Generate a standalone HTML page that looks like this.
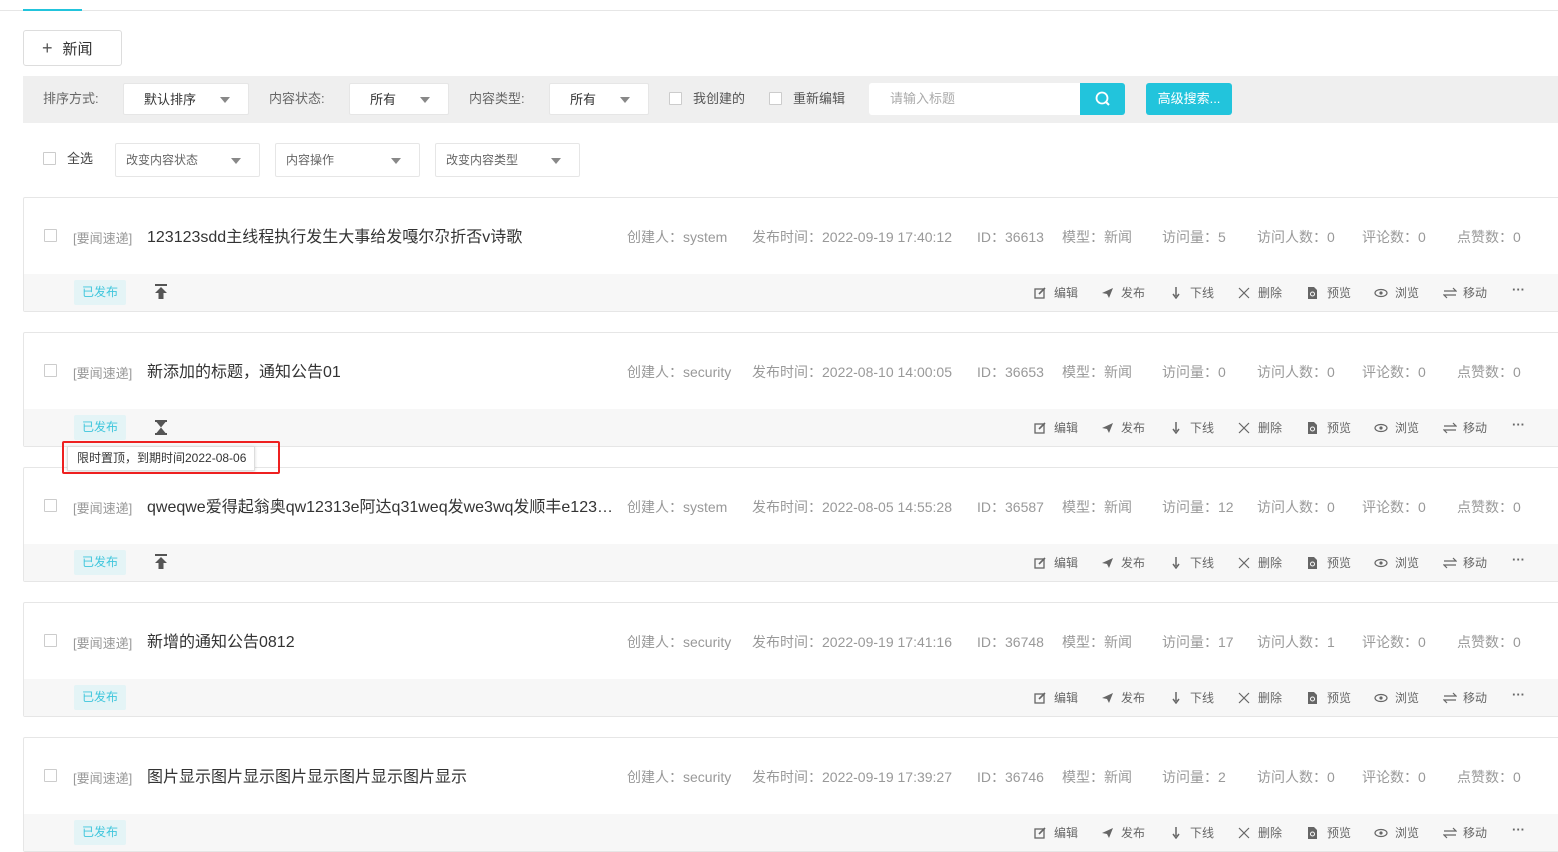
<!DOCTYPE html>
<html><head><meta charset="utf-8">
<style>
*{box-sizing:border-box;margin:0;padding:0}
body{width:1558px;height:805px;overflow:hidden;background:#fff;font-family:"Liberation Sans","Noto Sans CJK SC",sans-serif;color:#333;position:relative}
.a{position:absolute;white-space:nowrap}
.lbl{position:absolute;top:83px;height:32px;line-height:32px;font-size:13px;color:#666;white-space:nowrap}
.sel{position:absolute;background:#fff;border:1px solid #e6e6e6;border-radius:2px;height:32px;font-size:13px;color:#333;padding:0 0 0 20px;line-height:31px}
.sel .tri{position:absolute;right:18px;top:13px;width:0;height:0;border-left:5px solid transparent;border-right:5px solid transparent;border-top:6px solid #888}
.cb{position:absolute;width:13px;height:13px;border:1px solid #ccc;background:#fff;border-radius:1px}
.card{position:absolute;left:23px;width:1540px;height:115px;border:1px solid #e6e6e6;border-radius:2px;background:#fff}
.foot{position:absolute;left:0;right:0;top:76px;height:37px;background:#f7f7f7}
.tag{position:absolute;left:50px;top:6px;width:52px;height:25px;background:#e4f4f6;color:#3fc6dc;font-size:12px;line-height:25px;text-align:center;border-radius:2px}
.meta{position:absolute;top:29px;font-size:14px;color:#999;white-space:nowrap}
.t{position:absolute;top:25px;font-size:16px;color:#333;left:123px;white-space:nowrap}
.cat{position:absolute;top:30px;left:49px;font-size:13px;color:#999}
.act{position:absolute;top:10px;font-size:12px;color:#666}
.ic{position:absolute;top:12px}
</style></head><body>
<div class="a" style="left:0;top:10px;width:1558px;height:1px;background:#e6e6e6"></div>
<div class="a" style="left:23px;top:9px;width:59px;height:2px;background:#22c4dc"></div>
<div class="a" style="left:23px;top:30px;width:99px;height:36px;border:1px solid #ddd;border-radius:3px;font-size:15px;line-height:34px;padding-left:18px;color:#333"><span style="font-size:18px;color:#555;margin-right:10px">+</span>新闻</div>

<div class="a" style="left:23px;top:76px;width:1535px;height:47px;background:#efefef"></div>
<div class="lbl" style="left:43px">排序方式:</div>
<div class="sel" style="left:123px;top:83px;width:126px">默认排序<span class="tri"></span></div>
<div class="lbl" style="left:269px">内容状态:</div>
<div class="sel" style="left:349px;top:83px;width:100px">所有<span class="tri"></span></div>
<div class="lbl" style="left:469px">内容类型:</div>
<div class="sel" style="left:549px;top:83px;width:100px">所有<span class="tri"></span></div>
<div class="cb" style="left:669px;top:92px"></div><div class="lbl" style="left:693px;color:#555">我创建的</div>
<div class="cb" style="left:769px;top:92px"></div><div class="lbl" style="left:793px;color:#555">重新编辑</div>
<div class="a" style="left:869px;top:83px;width:212px;height:32px;background:#fff;border-radius:3px 0 0 3px;font-size:13px;color:#aaa;line-height:32px;padding-left:21px">请输入标题</div>
<div class="a" style="left:1080px;top:83px;width:45px;height:32px;background:#22c4dc;border-radius:0 3px 3px 0">
<svg width="45" height="32"><circle cx="22" cy="15" r="5.5" fill="none" stroke="#fff" stroke-width="1.8"/><line x1="26" y1="19" x2="29" y2="22" stroke="#fff" stroke-width="2"/></svg></div>
<div class="a" style="left:1146px;top:83px;width:86px;height:32px;background:#22c4dc;border-radius:3px;color:#fff;font-size:13px;line-height:32px;text-align:center">高级搜索...</div>

<div class="cb" style="left:43px;top:152px"></div><div class="a" style="left:67px;top:143px;line-height:32px;font-size:13px;color:#444">全选</div>
<div class="sel" style="left:115px;top:143px;width:145px;height:34px;font-size:12px;color:#666;padding-left:10px;line-height:32px">改变内容状态<span class="tri" style="top:14px"></span></div>
<div class="sel" style="left:275px;top:143px;width:145px;height:34px;font-size:12px;color:#666;padding-left:10px;line-height:32px">内容操作<span class="tri" style="top:14px"></span></div>
<div class="sel" style="left:435px;top:143px;width:145px;height:34px;font-size:12px;color:#666;padding-left:10px;line-height:32px">改变内容类型<span class="tri" style="top:14px"></span></div>

<div id="cards"></div>
<script>
const rows=[
["123123sdd主线程执行发生大事给发嘎尔尕折否v诗歌","system","2022-09-19 17:40:12","36613","5","0","0","0","top"],
["新添加的标题，通知公告01","security","2022-08-10 14:00:05","36653","0","0","0","0","hour"],
["qweqwe爱得起翁奥qw12313e阿达q31weq发we3wq发顺丰e123…","system","2022-08-05 14:55:28","36587","12","0","0","0","top"],
["新增的通知公告0812","security","2022-09-19 17:41:16","36748","17","1","0","0",""],
["图片显示图片显示图片显示图片显示图片显示","security","2022-09-19 17:39:27","36746","2","0","0","0",""]];
const icons={
edit:'<svg width="12" height="12"><rect x="1" y="2" width="9" height="9" fill="none" stroke="#666" stroke-width="1.3"/><path d="M5 7 L11 1" stroke="#666" stroke-width="1.6"/></svg>',
send:'<svg width="13" height="12"><path d="M1 6 L12 1 L8 11 L6 7 Z" fill="#666"/></svg>',
down:'<svg width="10" height="12"><path d="M5 0 V9 M2 7 L5 11 L8 7" stroke="#666" stroke-width="1.5" fill="none"/></svg>',
del:'<svg width="12" height="12"><path d="M1 1 L11 11 M11 1 L1 11" stroke="#666" stroke-width="1.2"/></svg>',
prev:'<svg width="11" height="12"><path d="M1 0 H7 L10 3 V12 H1 Z" fill="#666"/><circle cx="5.5" cy="7" r="2" fill="none" stroke="#fff" stroke-width="1"/></svg>',
eye:'<svg width="14" height="12"><ellipse cx="7" cy="6" rx="6" ry="3.5" fill="none" stroke="#666" stroke-width="1.2"/><circle cx="7" cy="6" r="1.6" fill="#666"/></svg>',
move:'<svg width="14" height="12"><path d="M1 4 H13 L10 1 M13 8 H1 L4 11" stroke="#666" stroke-width="1.2" fill="none"/></svg>'};
const acts=[["edit",1034,1054,"编辑"],["send",1101,1121,"发布"],["down",1171,1190,"下线"],["del",1238,1258,"删除"],["prev",1307,1327,"预览"],["eye",1374,1395,"浏览"],["move",1443,1463,"移动"]];
const mx=[[627,"创建人："],[752,"发布时间："],[977,"ID："],[1062,"模型："],[1162,"访问量："],[1257,"访问人数："],[1362,"评论数："],[1457,"点赞数："]];
let h='';
rows.forEach((r,i)=>{
 const top=197+i*135;
 h+=`<div class="card" style="top:${top}px"><div class="cb" style="left:20px;top:31px"></div><div class="cat">[要闻速递]</div><div class="t">${r[0]}</div>`;
 const vals=[r[1],r[2],r[3],"新闻",r[4],r[5],r[6],r[7]];
 mx.forEach((m,j)=>{h+=`<div class="meta" style="left:${m[0]-24}px">${m[1]}${vals[j]}</div>`});
 h+=`<div class="foot"><div class="tag">已发布</div>`;
 if(r[8]=="top")h+=`<svg style="position:absolute;left:130px;top:10px" width="14" height="16"><rect x="1" y="0" width="12" height="2" fill="#555"/><path d="M7 3 L13 9 H9.5 V15 H4.5 V9 H1 Z" fill="#555"/></svg>`;
 if(r[8]=="hour")h+=`<svg style="position:absolute;left:131px;top:11px" width="12" height="15"><rect x="0" y="0" width="12" height="2" fill="#555"/><rect x="0" y="13" width="12" height="2" fill="#555"/><path d="M1.5 2 L10.5 2 L6 7.5 Z M6 7.5 L10.5 13 L1.5 13 Z" fill="#555"/></svg>`;
 acts.forEach(a=>{h+=`<span class="ic" style="left:${a[1]-24}px">${icons[a[0]]}</span><span class="act" style="left:${a[2]-24}px">${a[3]}</span>`});
 h+=`<span class="act" style="left:1488px;top:8px;font-size:13px;font-weight:bold">···</span></div></div>`;
});
document.getElementById('cards').outerHTML=h;
</script>
<div class="a" style="left:67px;top:446px;width:188px;height:25px;background:#fff;border:1px solid #ddd;box-shadow:0 1px 3px rgba(0,0,0,.15);font-size:12px;color:#333;line-height:23px;padding-left:9px">限时置顶，到期时间2022-08-06</div>
<div class="a" style="left:62px;top:441px;width:218px;height:33px;border:2px solid #ee2020;border-radius:2px"></div>
</body></html>
